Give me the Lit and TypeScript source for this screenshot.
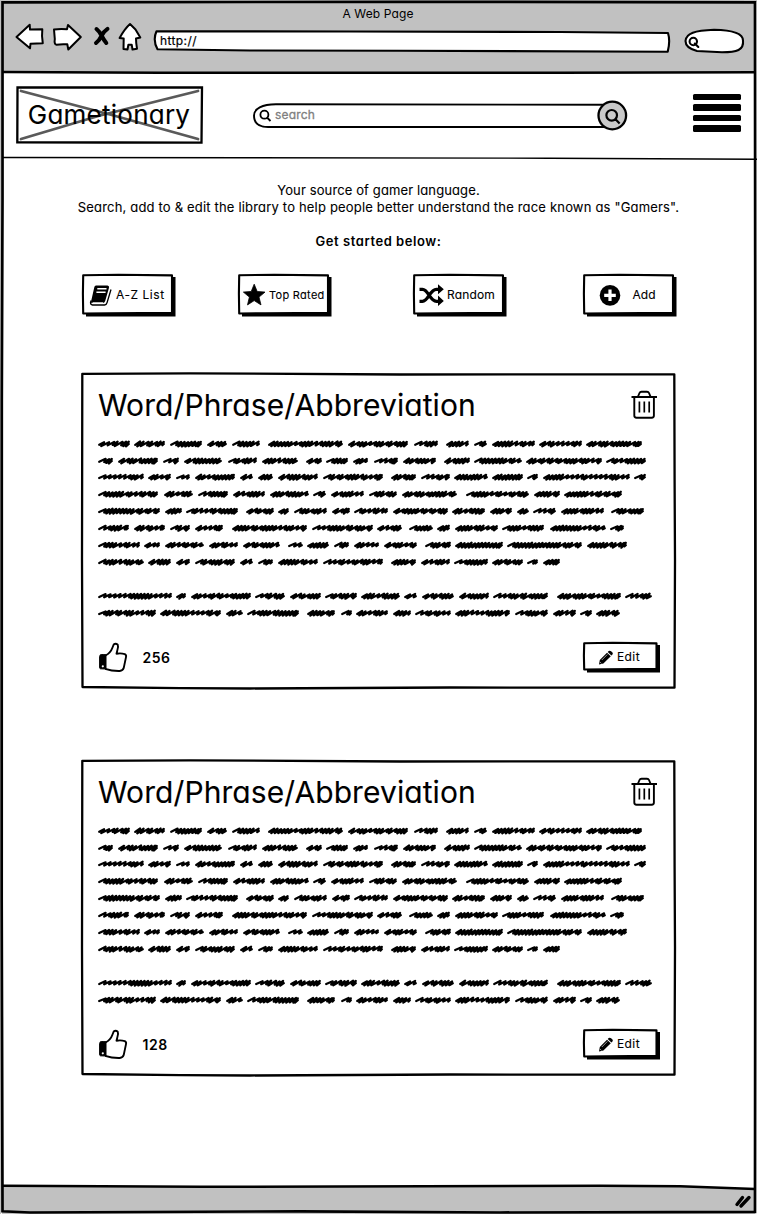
import { LitElement, html, css } from "lit";
import { customElement, property } from "lit/decorators.js";

const FONT = css`"Inter", "Lato", "Open Sans", sans-serif`;

/* Word extents of each scribbled line: [middle y, [start, end, start, end, ...]] inside a card. */
const LINES: [number, number[]][] = [
  [443.8, [98,130,134,165,170,202,207,227,232,260,268,343,348,408,414,438,446,469,474,487,492,535,539,582,586,642]],
  [460.8, [98,113,118,158,163,179,184,222,228,257,262,298,306,322,326,348,353,368,374,398,403,436,444,470,474,522,526,602,606,646]],
  [477, [98,144,148,171,176,190,195,235,240,253,258,273,278,318,323,383,391,416,421,450,454,488,492,523,527,538,543,630,634,646]],
  [494, [98,158,164,193,198,228,233,265,270,309,313,326,331,364,369,397,402,457,466,529,534,560,564,622]],
  [511, [98,160,165,182,186,238,246,274,278,289,294,327,332,350,354,388,393,448,452,485,490,512,517,529,533,556,561,604,611,644]],
  [528, [98,129,134,165,170,190,195,223,232,307,312,373,377,402,409,433,437,450,455,498,502,544,550,606,610,624]],
  [545, [98,140,144,160,165,204,209,238,243,280,288,303,307,329,334,349,354,379,384,417,425,451,455,503,507,582,587,627]],
  [562, [98,144,148,171,176,190,195,235,240,253,258,273,278,318,323,383,391,416,421,450,454,488,492,523,527,538,543,560]],
  [596, [98,172,176,186,191,251,255,285,290,321,325,357,361,400,404,417,422,454,459,489,493,548,557,621,625,652]],
  [613, [98,156,160,221,226,243,247,299,307,335,341,352,356,388,393,411,415,451,455,510,515,548,553,576,580,592,596,620]],
];

function scribble(x0: number, x1: number, y: number, seed: number): string {
  let s = seed * 7919 + 13;
  const rnd = () => {
    s = (s * 1103515245 + 12345) % 2147483648;
    return s / 2147483648;
  };
  let x = x0 + 1.2;
  let d = `M${x} ${y + 1}`;
  const end = x1 - 1.2;
  while (x < end - 3) {
    const dense = rnd() > 0.35;
    const step = dense ? 3.5 : 5;
    const top = y - 2.3 + rnd() * 0.7;
    const bottom = y + (dense ? 2.2 : 1.2) + rnd() * 0.5;
    const px = Math.min(x + step + 1.4, end);
    d += `L${px.toFixed(1)} ${top.toFixed(1)}L${(px - (dense ? 2.8 : 1.4)).toFixed(1)} ${bottom.toFixed(1)}`;
    x += step;
  }
  return d + `L${end} ${y + 0.2}`;
}

const SCRIBBLES = LINES.map(([y, xs], row) => {
  let d = "";
  for (let i = 0; i < xs.length; i += 2) d += scribble(xs[i], xs[i + 1], y, row * 31 + i + 1);
  return d;
}).join("");

@customElement("sketch-button")
class SketchButton extends LitElement {
  @property() kind = "book";
  @property() label = "";

  static styles = css`
    :host { display: block; width: 94px; height: 43px; font-family: ${FONT}; font-feature-settings: "cv11"; }
    :host([kind="pencil"]) { width: 78px; height: 31px; }
    .face { position: relative; box-sizing: border-box; height: 100%; display: flex; align-items: center; padding: 0 0 2px 6px; }
    .outline { position: absolute; inset: 0; width: 100%; height: 100%; overflow: visible; }
    .icon { position: relative; flex: none; }
    .label { position: relative; white-space: nowrap; font-size: 12px; line-height: 16px; color: #000; -webkit-text-stroke: 0.1px #000; }
    .icon-book { margin-left: 1px; }
    .icon-star { margin-left: -2px; }
    .book { margin-left: 3px; letter-spacing: 0.55px; }
    .star { margin-left: 3px; font-size: 11px; letter-spacing: 0.3px; }
    .shuffle { margin-left: 3px; letter-spacing: 0.15px; }
    .plus { margin-left: 11px; letter-spacing: 0; }
    .pencil { margin-left: 3px; letter-spacing: 0.4px; }
  `;

  private icon() {
    switch (this.kind) {
      case "book":
        return html`<svg class="icon icon-book" width="24" height="24" viewBox="89 283 24 24">
          <path d="M96 285.500h11.500q2 .2 1.500 2.200l-3.800 13.300q-.6 2-2.500 2H92.500q-1.800.2-1.500-1.200l3.300-14.500q.3-1.800 1.700-1.800z"/>
          <path d="M97.300 288.700h9.200M96.400 292.200h9.200" stroke="#fff" stroke-width="1.400"/>
          <path d="M111 289.500l-3.900 13q-.7 2.500-2.500 2.500H92.500q-2-.2-2-2.500l.6-2" fill="none" stroke="#000" stroke-width="1.300"/>
          <path d="M92.500 302.800h10.500" stroke="#fff" stroke-width="1.100"/>
        </svg>`;
      case "star":
        return html`<svg class="icon icon-star" width="24" height="24" viewBox="242 283 24 24">
          <path d="M254.200 284.200l3 7.300 7.800.6-6 5 2 7.800-6.800-4.300-6.700 4.300 1.900-7.800-6-5 7.800-.6z" stroke="#000" stroke-width=".8" stroke-linejoin="round"/>
        </svg>`;
      case "shuffle":
        return html`<svg class="icon" width="25" height="24" viewBox="419.500 283 25 24">
          <path d="M420 289.300h3c6 0 7 12 14 12h3M420 301.300h3c6 0 7-12 14-12h3" fill="none" stroke="#000" stroke-width="3.200"/>
          <path d="M438.500 284.300l5.800 5-5.800 5zM438.500 295.500l5.800 5.500-5.800 5z"/>
        </svg>`;
      case "plus":
        return html`<svg class="icon" width="33" height="24" viewBox="589 283 33 24">
          <circle cx="610" cy="295.400" r="10.300"/>
          <path d="M610 289.500v11.500M604.200 295.300h11.600" stroke="#fff" stroke-width="3.200"/>
        </svg>`;
      default:
        return html`<svg class="icon" width="25" height="20" viewBox="589 646.500 25 20">
          <path d="M599 664l.8-4.500 7.200-7.300 3.800 3.600-7.400 7.200z M607.700 651.500l1-1q1.200-.8 2.400.2l1.400 1.400q.8 1-.2 2.100l-.9.900z"/>
          <path d="M601.800 659.500l5.600-5.600" stroke="#fff" stroke-width=".6"/>
          <path d="M600.300 661.800l1 1" stroke="#fff" stroke-width=".8"/>
        </svg>`;
    }
  }

  render() {
    const small = this.kind === "pencil";
    const w = small ? 74.500 : 91;
    const h = small ? 27.500 : 39.500;
    return html`<div class="face">
      <svg class="outline">
        <path d="M4 ${h + 1}H${w + 0.500}V3" fill="none" stroke="#000" stroke-width="4"/>
        <path d="M1.200 1.200L${w * 0.4} .7L${w - 1} 1.400L${w - 1} ${h - 0.800}L${w * 0.3} ${h - 0.300}L1.200 ${h}L.9 ${h * 0.5}z" fill="#fff" stroke="#000" stroke-width="2.100" stroke-linejoin="round"/>
      </svg>
      ${this.icon()}<span class="label ${this.kind}">${this.label}</span>
    </div>`;
  }
}

@customElement("phrase-card")
class PhraseCard extends LitElement {
  @property() votes = "";

  static styles = css`
    :host { display: block; width: 595px; height: 317px; font-family: ${FONT}; font-feature-settings: "cv11"; }
    .card { position: relative; box-sizing: border-box; height: 100%; padding: 15px 16px 0 17px; display: flex; flex-direction: column; }
    .outline { position: absolute; inset: 0; overflow: visible; }
    .head { position: relative; display: flex; justify-content: space-between; height: 43px; }
    .title { font-size: 30px; line-height: 36px; letter-spacing: 0.08px; white-space: nowrap; color: #000; -webkit-text-stroke: 0.1px #000; }
    .trash { margin: 3px 1px 0 0; }
    .text { position: relative; display: block; overflow: visible; }
    .foot { position: relative; display: flex; align-items: flex-start; margin-top: 10px; }
    .votes { margin: 8px auto 0 13.500px; font-size: 14px; font-weight: 600; line-height: 18px; letter-spacing: 0.5px; }
    .edit { margin: 0 -1px 0 0; padding-top: 1px; }
  `;

  render() {
    return html`<div class="card">
      <svg class="outline" width="595" height="317" viewBox="81 372 595 317">
        <path d="M82.300 373.800L190 373.300L400 374.500L674.300 374.300L674.600 480L675 560L674.500 687.700L450 687.500L250 688.500L180 688.200L82.500 687L82 560z" fill="#fff" stroke="#000" stroke-width="2.300" stroke-linejoin="round"/>
      </svg>
      <div class="head">
        <span class="title">Word/Phrase/Abbreviation</span>
        <svg class="trash" width="28" height="30" viewBox="631 390 28 30" fill="none" stroke="#000" stroke-width="1.900">
          <path d="M631.500 397h25.500M634.300 397.500v18q0 2.200 2.200 2.200h15.200q2.200 0 2.200-2.200v-18M638 396.500l1.500-3.500q.5-1.200 2-1.200h5.500q1.500 0 2 1.200l1.500 3.500"/>
          <path d="M639.400 401.500v11M644.300 401.500v11M649.200 401.500v11" stroke-width="1.700"/>
        </svg>
      </div>
      <svg class="text" width="560" height="201" viewBox="98 430 560 201">
        <path d=${SCRIBBLES} fill="none" stroke="#000" stroke-width="2.200" stroke-linejoin="round" stroke-linecap="round"/>
      </svg>
      <div class="foot">
        <svg width="31" height="32" viewBox="98 641 31 32">
          <path d="M105.500 655.500q5-2.500 6.800-7.500l1.400-3.500q2-1.800 4 .2q1 2.500-.4 5.800l-.8 3.200q4.500-.8 8.300.4q1.800.9 1.200 3l-2.300 11q-.8 2.700-4 2.900q-7.500.2-14.500-2.200" fill="#fff" stroke="#000" stroke-width="1.900" stroke-linejoin="round"/>
          <path d="M100.300 654.800q3-.6 5.700 0v14.200l-5.500-.2q-1-.2-.9-1.700v-10.500z" stroke="#000" stroke-linejoin="round"/>
          <circle cx="102.800" cy="666.300" r="1.100" fill="#fff"/>
        </svg>
        <span class="votes">${this.votes}</span>
        <sketch-button class="edit" kind="pencil" label="Edit"></sketch-button>
      </div>
    </div>`;
  }
}

@customElement("app-root")
class AppRoot extends LitElement {
  static styles = css`
    :host { display: block; width: 757px; height: 1214px; overflow: hidden; background: #fff; color: #000; font-family: ${FONT}; font-feature-settings: "cv11"; }
    .window { position: relative; height: 1214px; display: flex; flex-direction: column; }
    .frame { position: absolute; inset: 0; pointer-events: none; }
    .chrome { height: 73px; background: #c1c1c1; margin: 0 2px; display: flex; flex-direction: column; }
    .caption { height: 20px; padding: 6px 1px 0 0; box-sizing: border-box; text-align: center; font-size: 12px; line-height: 16px; letter-spacing: 0.12px; }
    .tools { display: flex; padding-left: 12px; }
    .address { position: relative; width: 522px; height: 34px; margin-left: 3px; }
    .address-box { position: absolute; inset: 0; }
    .url { position: relative; display: block; padding: 13px 0 0 9px; font-size: 12px; line-height: 16px; letter-spacing: 0.4px; -webkit-text-stroke: 0.2px #000; }
    .mast { height: 85px; display: flex; align-items: flex-start; justify-content: space-between; box-sizing: border-box; padding: 12px 16px 0 15px; }
    .logo { position: relative; width: 189px; height: 60px; display: flex; align-items: center; justify-content: center; }
    .logo-box { position: absolute; inset: 0; }
    .brand { position: relative; font-size: 26px; line-height: 32px; letter-spacing: 0.25px; padding: 0 1px 1px 0; -webkit-text-stroke: 0.1px #000; }
    .search { position: relative; width: 380px; height: 34px; margin: 13px 0 0 -16px; }
    .search-box { position: absolute; inset: 0; }
    .hint { position: relative; display: block; padding: 9px 0 0 24.500px; font-size: 12px; line-height: 16px; color: #808080; letter-spacing: 0.2px; -webkit-text-stroke: 0.3px #808080; }
    .menu { width: 48px; display: flex; flex-direction: column; gap: 4px; margin-top: 9px; }
    .bar { height: 6.400px; border-radius: 1.500px; background: #000; }
    .intro { margin-top: 24px; text-align: center; font-size: 13px; line-height: 17px; white-space: nowrap; }
    .line { display: block; -webkit-text-stroke: 0.1px #000; }
    .one { letter-spacing: 0.12px; }
    .two { letter-spacing: 0.180px; }
    .start { display: block; margin-top: 17px; font-weight: 600; letter-spacing: 0.55px; }
    .actions { display: grid; grid-template-columns: 156px 175px 169.500px 94px; margin: 24px 0 0 82px; }
    .cards { display: flex; flex-direction: column; gap: 70px; margin: 55px 0 0 81px; }
    .status { height: 28px; background: #c1c1c1; margin: auto 2px 0; }
  `;

  render() {
    return html`<div class="window">
      <header class="chrome">
        <div class="caption">A Web Page</div>
        <div class="tools">
          <svg width="33" height="34" viewBox="14 20 33 34"><path d="M16.500 37L29.700 24.800L30 29.600L42.300 29.300Q41.500 36 42.800 43.300L30.500 43.700L30 48.300z" fill="#fff" stroke="#000" stroke-width="2" stroke-linejoin="round"/></svg>
          <svg width="39" height="34" viewBox="47 20 39 34"><path d="M54 29.500Q60 28.500 67 29.200L68 25L80.800 37L68.300 49.500L67.300 44.300Q61 43.800 56.500 44.800Q54 44.300 54.800 39z" fill="#fff" stroke="#000" stroke-width="2" stroke-linejoin="round"/></svg>
          <svg width="28" height="34" viewBox="86 20 28 34"><path d="M96.500 29Q99.500 31.500 101.500 35.500T106.300 43M107.500 28.800Q103.500 31.500 101.500 35.800T96 43" fill="none" stroke="#000" stroke-width="4" stroke-linecap="round"/></svg>
          <svg width="34" height="34" viewBox="114 20 34 34"><path d="M130 24L135.500 29.500L140.300 37.600L136 38.500Q136 43 137 48.700L132.500 49.500L131.700 44.700H128.400L127.500 49.500L123.500 49L123.700 38.500L119.600 38Q124.500 29 130 24z" fill="#fff" stroke="#000" stroke-width="2" stroke-linejoin="round"/></svg>
          <div class="address">
            <svg class="address-box" width="522" height="34" viewBox="151 20 522 34"><path d="M156.500 31.300L350 31.500L560 32L668 33Q670.500 41 667.700 51.700L400 50.700L250 50.500L157.500 49.300Q152.500 40 156.500 31.300z" fill="#fff" stroke="#000" stroke-width="2.100" stroke-linejoin="round"/></svg>
            <span class="url">http://</span>
          </div>
          <svg width="74" height="34" viewBox="673 20 74 34">
            <path d="M685.500 41C686 33 695 30.500 714 29.700C733 30 743 33 743 40.500C744 50 737 52.300 722 52.300L697 51Q685.500 48 685.500 41z" fill="#fff" stroke="#000" stroke-width="2.100"/>
            <path d="M697 41.500a3.700 3.700 0 1 0-7.400 0a3.700 3.700 0 1 0 7.400 0M694.800 43.500l3.500 3.500" fill="none" stroke="#000" stroke-width="2.100" stroke-linecap="round"/>
          </svg>
        </div>
      </header>

      <nav class="mast">
        <div class="logo">
          <svg class="logo-box" width="189" height="60" viewBox="15 85 189 60">
            <path d="M17.500 87.300L202 87.500L201.500 142.700L110 142.500L17.300 142.300z" fill="#fff" stroke="#000" stroke-width="2.300"/>
            <path d="M21 91L110 114.500L198 139M21 139L100 115.500L198 91" fill="none" stroke="#5a5a5a" stroke-width="2.800" stroke-linecap="round"/>
          </svg>
          <span class="brand">Gametionary</span>
        </div>
        <div class="search">
          <svg class="search-box" width="380" height="34" viewBox="251 98 380 34">
            <path d="M612 104.700L276 104.300C262 104.300 254 109 254 115.500C254 122 257 127 268 127L612 127" fill="#fff" stroke="#000" stroke-width="1.900"/>
            <path d="M268.400 114.700a4 4 0 1 0-8 0a4 4 0 1 0 8 0M267 117.500l3.500 3.500" fill="none" stroke="#000" stroke-width="1.800"/>
            <circle cx="612.300" cy="115.500" r="13.800" fill="#c8c8c8" stroke="#000" stroke-width="2.300"/>
            <path d="M617 115.300a5.300 5.300 0 1 0-10.600 0a5.300 5.300 0 1 0 10.600 0M615.300 119l4.300 4.500" fill="none" stroke="#000" stroke-width="2.200"/>
          </svg>
          <span class="hint">search</span>
        </div>
        <div class="menu"><div class="bar"></div><div class="bar"></div><div class="bar"></div><div class="bar"></div></div>
      </nav>

      <section class="intro">
        <span class="line one">Your source of gamer language.</span>
        <span class="line two">Search, add to &amp; edit the library to help people better understand the race known as "Gamers".</span>
        <b class="start">Get started below:</b>
      </section>

      <section class="actions">
        <sketch-button kind="book" label="A-Z List"></sketch-button>
        <sketch-button kind="star" label="Top Rated"></sketch-button>
        <sketch-button kind="shuffle" label="Random"></sketch-button>
        <sketch-button kind="plus" label="Add"></sketch-button>
      </section>

      <main class="cards">
        <phrase-card votes="256"></phrase-card>
        <phrase-card votes="128"></phrase-card>
      </main>

      <footer class="status"></footer>

      <svg class="frame" width="757" height="1214" viewBox="0 0 757 1214" fill="none" stroke="#000">
        <path d="M0 0H757V1.500H0zM0 0H1V1214H0z" fill="#c1c1c1" stroke="none"/>
        <path d="M560 1180V1185.700L680 1186.300L754 1189V1180z" fill="#fff" stroke="none"/>
        <path d="M2.500 2.300L400 1.800L755 2.300L755.500 700L755 1211.800L500 1212.500L300 1211.300L30 1212.500L2.500 1211.300L1.700 900L1.800 400L2.500 200z" stroke-width="2.700"/>
        <path d="M3 72L160 72.800L560 72.800L755 72.300" stroke-width="2.600"/>
        <path d="M3 157.500L250 157.700L550 158.200L757 159.200" stroke-width="1.400"/>
        <path d="M3 1185.800L200 1186.800L600 1185.700L680 1186.300L755 1189" stroke-width="2.500"/>
        <path d="M737 1204.500l5.500-7M741 1206l8-8.500" stroke-width="3.400" stroke-linecap="round"/>
      </svg>
    </div>`;
  }
}
